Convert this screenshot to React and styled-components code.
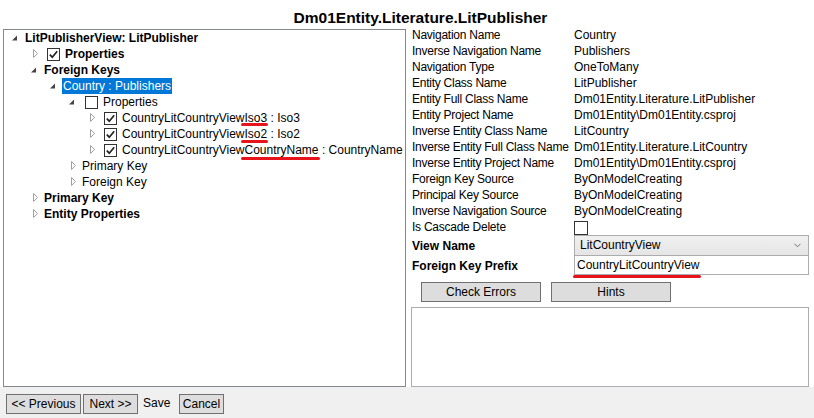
import React from 'react'
import styled, { createGlobalStyle } from 'styled-components'

const GlobalStyle = createGlobalStyle`
  html, body {
    margin: 0;
    padding: 0;
    background: #ffffff;
  }
  body {
    font-family: "Liberation Sans", Arial, sans-serif;
    font-size: 12px;
    color: #000000;
  }
  * { box-sizing: border-box; }
`

const Window = styled.div`
  width: 814px;
  height: 418px;
  display: flex;
  flex-direction: column;
  background: #ffffff;
  overflow: hidden;
`
const Header = styled.div`
  height: 27px;
  display: flex;
  align-items: center;
  justify-content: center;
  padding: 9px 0 0 27px;
`
const Title = styled.div`
  font-weight: bold;
  font-size: 15.5px;
  line-height: 18px;
`
const Body = styled.div`
  flex: 1;
  display: flex;
  min-height: 0;
`

/* ---------- tree ---------- */
const TreeBox = styled.div`
  width: 403px;
  margin: 2px 0 0 3px;
  border: 1px solid #828790;
  background: #ffffff;
`
const TreeRow = styled.div`
  height: 16px;
  display: flex;
  align-items: center;
  padding-left: ${p => 1 + p.level * 19}px;
  white-space: nowrap;
`
const Expander = styled.span`
  width: 19px;
  height: 16px;
  flex: none;
  display: flex;
`
const Check = styled.span`
  width: 13px;
  height: 13px;
  flex: none;
  border: 1px solid #333333;
  background: #ffffff;
  margin-left: ${p => p.ml || 0}px;
  display: flex;
  align-items: center;
  justify-content: center;
`
const NodeText = styled.span`
  line-height: 16px;
  height: 16px;
  padding: 0 1px;
  margin-left: ${p => p.afterCheck ? 4 : 0}px;
  font-weight: ${p => p.bold ? 'bold' : 'normal'};
  background: ${p => p.selected ? '#0078d7' : 'transparent'};
  color: ${p => p.selected ? '#ffffff' : '#000000'};
`
const Marked = styled.span`
  position: relative;
  &::after {
    content: '';
    position: absolute;
    left: -4px;
    right: -1px;
    bottom: ${p => p.drop || -1}px;
    height: 3px;
    border-radius: 2px;
    background: #e8141c;
  }
`

const ExpandedGlyph = () => (
  <svg width="19" height="16" viewBox="0 0 19 16">
    <path d="M12 5.5 L12 10.5 L7 10.5 Z" fill="#444444" />
  </svg>
)
const CollapsedGlyph = () => (
  <svg width="19" height="16" viewBox="0 0 19 16">
    <path d="M9.5 3.5 L9.5 11.5 L13.5 7.5 Z" fill="none" stroke="#a0a0a0" strokeWidth="1" />
  </svg>
)
const CheckGlyph = () => (
  <svg width="11" height="11" viewBox="0 0 11 11">
    <path d="M1.8 5.6 L4.3 8.2 L9.2 2.2" fill="none" stroke="#222222" strokeWidth="1.7" />
  </svg>
)

const treeNodes = [
  { level: 0, exp: 'open', text: 'LitPublisherView: LitPublisher', bold: true },
  { level: 1, exp: 'closed', check: true, text: 'Properties', bold: true },
  { level: 1, exp: 'open', text: 'Foreign Keys', bold: true },
  { level: 2, exp: 'open', text: 'Country : Publishers', selected: true },
  { level: 3, exp: 'open', check: false, text: 'Properties' },
  { level: 4, exp: 'closed', check: true, pre: 'CountryLitCountryView', mark: 'Iso3', post: ' : Iso3', drop: -1 },
  { level: 4, exp: 'closed', check: true, pre: 'CountryLitCountryView', mark: 'Iso2', post: ' : Iso2', drop: -2 },
  { level: 4, exp: 'closed', check: true, pre: 'CountryLitCountryView', mark: 'CountryName', post: ' : CountryName', drop: -3 },
  { level: 3, exp: 'closed', text: 'Primary Key' },
  { level: 3, exp: 'closed', text: 'Foreign Key' },
  { level: 1, exp: 'closed', text: 'Primary Key', bold: true },
  { level: 1, exp: 'closed', text: 'Entity Properties', bold: true },
]

function TreeNode({ n }) {
  const hasCheck = n.check !== undefined
  return (
    <TreeRow level={n.level}>
      <Expander>{n.exp === 'open' ? <ExpandedGlyph /> : <CollapsedGlyph />}</Expander>
      {hasCheck && <Check ml={4}>{n.check && <CheckGlyph />}</Check>}
      <NodeText bold={n.bold} selected={n.selected} afterCheck={hasCheck}>
        {n.mark ? (
          <>
            {n.pre}
            <Marked drop={n.drop}>{n.mark}</Marked>
            {n.post}
          </>
        ) : n.text}
      </NodeText>
    </TreeRow>
  )
}

/* ---------- detail panel ---------- */
const Detail = styled.div`
  width: 398px;
  margin-left: 5px;
  display: flex;
  flex-direction: column;
`
const PropGrid = styled.div`
  display: grid;
  grid-template-columns: 163px 1fr;
  grid-auto-rows: 16px;
  align-items: center;
`
const Label = styled.div`
  padding-left: 1px;
  line-height: 16px;
  white-space: nowrap;
  letter-spacing: ${p => p.bold ? 0 : -0.25}px;
  font-weight: ${p => p.bold ? 'bold' : 'normal'};
`
const Value = styled.div`
  line-height: 16px;
  white-space: nowrap;
`
const BoxCheck = styled.span`
  display: block;
  width: 14px;
  height: 14px;
  border: 1px solid #333333;
  background: #ffffff;
  margin-top: 1px;
`
const FieldRow = styled.div`
  height: ${p => p.h}px;
  display: grid;
  grid-template-columns: 163px 1fr;
  align-items: center;
`
const Combo = styled.div`
  height: 21px;
  border: 1px solid #acacac;
  background: linear-gradient(#f0f0f0, #e5e5e5);
  display: flex;
  align-items: center;
  justify-content: space-between;
  padding: 0 7px 1px 5px;
`
const TextBox = styled.div`
  height: 19px;
  border: 1px solid #abadb3;
  border-top: none;
  background: #ffffff;
  display: flex;
  align-items: center;
  padding: 0 0 1px 2px;
`
const ButtonBar = styled.div`
  display: flex;
  gap: 10px;
  margin: 7px 0 0 10px;
`
const Button = styled.button`
  width: ${p => p.w}px;
  height: 20px;
  border: 1px solid #707070;
  background: #dddddd;
  font-family: "Liberation Sans", Arial, sans-serif;
  font-size: 12px;
  color: #000000;
  padding: 0 0 1px;
  text-align: center;
`
const Output = styled.div`
  flex: 1;
  margin-top: 5px;
  border: 1px solid #abadb3;
  background: #ffffff;
`

/* ---------- footer ---------- */
const Footer = styled.div`
  height: 31px;
  flex: none;
  background: #f0f0f0;
  display: flex;
  align-items: flex-start;
  gap: 2px;
  padding: 7px 0 0 6px;
`
const FlatLabel = styled.span`
  width: 37px;
  height: 20px;
  line-height: 19px;
  padding-left: 3px;
`

const props = [
  ['Navigation Name', 'Country'],
  ['Inverse Navigation Name', 'Publishers'],
  ['Navigation Type', 'OneToMany'],
  ['Entity Class Name', 'LitPublisher'],
  ['Entity Full Class Name', 'Dm01Entity.Literature.LitPublisher'],
  ['Entity Project Name', 'Dm01Entity\\Dm01Entity.csproj'],
  ['Inverse Entity Class Name', 'LitCountry'],
  ['Inverse Entity Full Class Name', 'Dm01Entity.Literature.LitCountry'],
  ['Inverse Entity Project Name', 'Dm01Entity\\Dm01Entity.csproj'],
  ['Foreign Key Source', 'ByOnModelCreating'],
  ['Principal Key Source', 'ByOnModelCreating'],
  ['Inverse Navigation Source', 'ByOnModelCreating'],
]

export default function App() {
  return (
    <>
      <GlobalStyle />
      <Window>
        <Header>
          <Title>Dm01Entity.Literature.LitPublisher</Title>
        </Header>
        <Body>
          <TreeBox>
            {treeNodes.map((n, i) => <TreeNode key={i} n={n} />)}
          </TreeBox>
          <Detail>
            <PropGrid>
              {props.map(([k, v]) => (
                <React.Fragment key={k}>
                  <Label>{k}</Label>
                  <Value>{v}</Value>
                </React.Fragment>
              ))}
              <Label>Is Cascade Delete</Label>
              <Value><BoxCheck /></Value>
            </PropGrid>
            <FieldRow h={21}>
              <Label bold>View Name</Label>
              <Combo>
                <span>LitCountryView</span>
                <svg width="7" height="5" viewBox="0 0 7 5">
                  <path d="M0.5 0.8 L3.5 3.8 L6.5 0.8" fill="none" stroke="#707070" strokeWidth="1" />
                </svg>
              </Combo>
            </FieldRow>
            <FieldRow h={19}>
              <Label bold>Foreign Key Prefix</Label>
              <TextBox>
                <Marked drop={-6}>CountryLitCountryView</Marked>
              </TextBox>
            </FieldRow>
            <ButtonBar>
              <Button w={120}>Check Errors</Button>
              <Button w={120}>Hints</Button>
            </ButtonBar>
            <Output />
          </Detail>
        </Body>
        <Footer>
          <Button w={75}>&lt;&lt; Previous</Button>
          <Button w={55}>Next &gt;&gt;</Button>
          <FlatLabel>Save</FlatLabel>
          <Button w={45}>Cancel</Button>
        </Footer>
      </Window>
    </>
  )
}
